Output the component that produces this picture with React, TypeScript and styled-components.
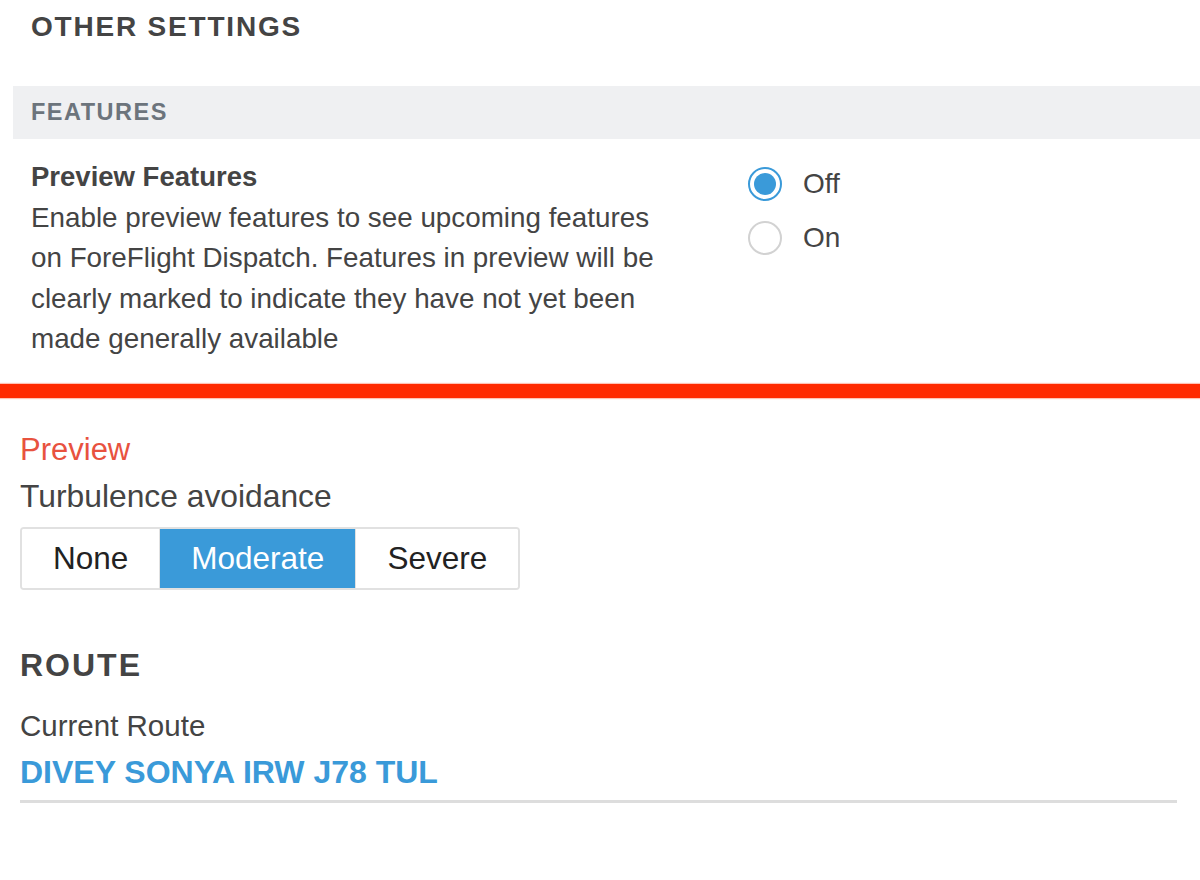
import styled, { createGlobalStyle } from "styled-components";

const GlobalStyle = createGlobalStyle`
  body {
    margin: 0;
    background: #ffffff;
    font-family: "Liberation Sans", Arial, sans-serif;
    color: #444444;
  }
`;

const Page = styled.div`
  width: 1200px;
  overflow: hidden;
`;

const SettingsPanel = styled.div`
  padding-left: 13px;
`;

const PageTitle = styled.h1`
  margin: 0;
  padding: 13px 0 0 18px;
  height: 86px;
  box-sizing: border-box;
  font-size: 28px;
  line-height: 28px;
  font-weight: 700;
  letter-spacing: 1.8px;
  color: #444444;
`;

const SectionBar = styled.div`
  height: 53px;
  display: flex;
  align-items: center;
  padding-left: 18px;
  background: #eff0f2;
  font-size: 23.5px;
  font-weight: 700;
  letter-spacing: 1.5px;
  color: #6c747c;
`;

const FeatureRow = styled.div`
  display: flex;
  padding: 18px 18px 24px;
`;

const FeatureText = styled.div`
  width: 640px;
  font-size: 27.8px;
  line-height: 40.5px;
`;

const FeatureTitle = styled.div`
  font-size: 27.5px;
  font-weight: 700;
`;

const RadioGroup = styled.div`
  margin-left: 77px;
  display: flex;
  flex-direction: column;
`;

const RadioRow = styled.label`
  display: flex;
  align-items: center;
  height: 54px;
  gap: 21px;
  font-size: 28px;
  color: #444444;
`;

const RadioCircle = styled.span<{ $checked?: boolean }>`
  width: 34px;
  height: 34px;
  box-sizing: border-box;
  border-radius: 50%;
  border: 2px solid ${(p) => (p.$checked ? "#3a9ad9" : "#d2d2d2")};
  display: flex;
  align-items: center;
  justify-content: center;
  &::after {
    content: "";
    width: 22px;
    height: 22px;
    border-radius: 50%;
    background: ${(p) => (p.$checked ? "#3a9ad9" : "transparent")};
  }
`;

const PreviewDivider = styled.div`
  height: 14px;
  background: #ff2a00;
  box-shadow: 0 0 1px 1px #ffc2b5;
`;

const PreviewSection = styled.div`
  padding: 29px 23px 0 20px;
`;

const PreviewLabel = styled.div`
  font-size: 31px;
  line-height: 46px;
  color: #e8523f;
`;

const FieldLabel = styled.div`
  font-size: 31.8px;
  line-height: 46px;
  color: #444444;
`;

const SegmentGroup = styled.div`
  margin-top: 8px;
  display: inline-flex;
  height: 63px;
  box-sizing: border-box;
  border: 2px solid #e1e1e1;
  border-radius: 4px;
  overflow: hidden;
`;

const Segment = styled.div<{ $active?: boolean }>`
  display: flex;
  align-items: center;
  padding: 0 31px;
  font-size: 31.5px;
  color: ${(p) => (p.$active ? "#ffffff" : "#222222")};
  background: ${(p) => (p.$active ? "#3a9ad9" : "#ffffff")};
  & + & {
    border-left: 1px solid #e1e1e1;
  }
`;

const RouteTitle = styled.h2`
  margin: 55px 0 0;
  font-size: 32px;
  line-height: 40px;
  font-weight: 700;
  letter-spacing: 2px;
  color: #444444;
`;

const RouteLabel = styled.div`
  margin-top: 21px;
  font-size: 29.5px;
  line-height: 40px;
  color: #444444;
`;

const RouteValue = styled.div`
  margin-top: 6px;
  font-size: 32px;
  line-height: 40px;
  font-weight: 700;
  color: #3a9ad9;
  padding-bottom: 8px;
  border-bottom: 3px solid #dddddd;
`;

const options = ["None", "Moderate", "Severe"];

export default function App() {
  return (
    <Page>
      <GlobalStyle />
      <SettingsPanel>
        <PageTitle>OTHER SETTINGS</PageTitle>
        <SectionBar>FEATURES</SectionBar>
        <FeatureRow>
          <FeatureText>
            <FeatureTitle>Preview Features</FeatureTitle>
            Enable preview features to see upcoming features on ForeFlight
            Dispatch. Features in preview will be clearly marked to indicate
            they have not yet been made generally available
          </FeatureText>
          <RadioGroup>
            <RadioRow>
              <RadioCircle $checked />
              Off
            </RadioRow>
            <RadioRow>
              <RadioCircle />
              On
            </RadioRow>
          </RadioGroup>
        </FeatureRow>
      </SettingsPanel>
      <PreviewDivider />
      <PreviewSection>
        <PreviewLabel>Preview</PreviewLabel>
        <FieldLabel>Turbulence avoidance</FieldLabel>
        <SegmentGroup>
          {options.map((o) => (
            <Segment key={o} $active={o === "Moderate"}>
              {o}
            </Segment>
          ))}
        </SegmentGroup>
        <RouteTitle>ROUTE</RouteTitle>
        <RouteLabel>Current Route</RouteLabel>
        <RouteValue>DIVEY SONYA IRW J78 TUL</RouteValue>
      </PreviewSection>
    </Page>
  );
}
